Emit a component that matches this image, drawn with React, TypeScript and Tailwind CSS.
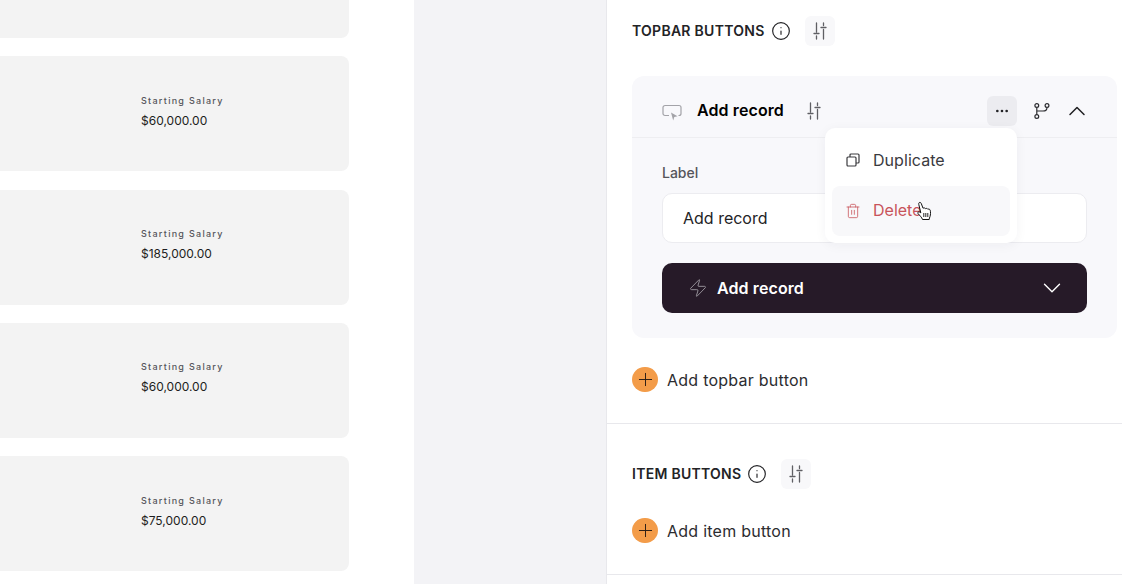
import React from 'react';
import { ChevronDown, ChevronUp, Ellipsis, Info, Plus, Trash2, Zap } from 'lucide-react';

const font = { fontFamily: 'Inter, sans-serif' };

const salaries = ['$60,000.00', '$185,000.00', '$60,000.00', '$75,000.00'];

const SlidersIcon = ({ className = '' }: { className?: string }) => (
  <svg width="14" height="18" viewBox="0 0 14 18" fill="none" stroke="currentColor" strokeWidth="1.3" strokeLinecap="round" className={className}>
    <path d="M3.500 1v9M1 11.500h5M3.500 14v3" />
    <path d="M10.500 1v2.500M8 5.500h5M10.500 7.500V17" />
  </svg>
);

const ScreenIcon = () => (
  <svg width="20" height="18" viewBox="0 0 20 18" fill="none" className="mt-[4px] text-[#a3a3a8]">
    <path d="M7 11.500H3a2 2 0 0 1-2-2V3.500a2 2 0 0 1 2-2h14a2 2 0 0 1 2 2v6a2 2 0 0 1-2 2h-.5" stroke="currentColor" strokeWidth="1.2" />
    <path d="M9 8.500l6.500 3.700-3.200.9-1.100 3.400z" fill="currentColor" />
  </svg>
);

const BranchIcon = () => (
  <svg width="18" height="18" viewBox="0 0 18 18" fill="none" stroke="currentColor" strokeWidth="1.2" className="text-[#2b2b2f]">
    <circle cx="3.800" cy="3.500" r="1.900" />
    <circle cx="14" cy="3.500" r="1.900" />
    <circle cx="3.800" cy="14.500" r="1.900" />
    <path d="M3.800 5.400v7.200M14 5.400c0 2.600-2 3.600-4 3.600H3.800" />
  </svg>
);

const CopyIcon = () => (
  <svg width="14" height="14" viewBox="0 0 14 14" fill="none" stroke="currentColor" strokeWidth="1.200">
    <rect x="1" y="4" width="9" height="9" rx="1" />
    <path d="M4 4V2a1 1 0 0 1 1-1h7a1 1 0 0 1 1 1v7a1 1 0 0 1-1 1h-2" />
  </svg>
);

const HandCursor = () => (
  <svg width="16" height="20" viewBox="0 0 16 20" className="absolute top-[201px] left-[916px]">
    <path
      d="M3 1.800c.8-.8 2-.3 2.300.8L7 7.200c1-.5 2-.3 2.500.4.900-.4 1.800-.2 2.300.6.900-.3 2-.1 2.400 1 .5 1.800.4 4.500-.2 6.300-.4 1.300-.8 2-.8 3H6.500c-.3-1.200-1-2-2-3.200L2 12.500c-.6-.9.300-2 1.300-1.600l1.500.9L2.800 3.500c-.2-.6-.1-1.300.2-1.700z"
      fill="#fff"
      stroke="#111"
      strokeWidth="1"
      strokeLinejoin="round"
    />
    <path d="M7.800 12v4M9.800 12v4M11.800 12v4" stroke="#111" strokeWidth="0.9" />
  </svg>
);

const SectionTitle = ({ title }: { title: string }) => (
  <div className="flex items-center">
    <span className="mb-[1px] text-[14px] font-semibold tracking-[0.27px] text-[#232326]">{title}</span>
    <Info size={20} strokeWidth={1.4} className="ml-[6px] text-[#232326]" />
    <div className="ml-[14px] flex h-[30px] w-[30px] items-center justify-center rounded-md bg-[#f8f8fa] text-[#5f5f64]">
      <SlidersIcon />
    </div>
  </div>
);

const AddRow = ({ label }: { label: string }) => (
  <div className="flex items-center gap-[9px]">
    <div className="flex h-[25px] w-[26px] items-center justify-center rounded-full bg-[#f39c49] text-[#2a1c14]">
      <Plus size={21} strokeWidth={1.1} />
    </div>
    <span className="text-[16px] tracking-[0.25px] text-[#2c2c30]">{label}</span>
  </div>
);

export default function App() {
  return (
    <div className="relative flex h-[584px] w-[1122px] overflow-hidden bg-white" style={font}>
      {/* list preview */}
      <div className="w-[414px] shrink-0">
        <div className="-mt-[77px] -ml-[20px] flex flex-col gap-[18.250px] pr-[65px]">
          <div className="h-[115px] rounded-lg bg-[#f3f3f3]" />
          {salaries.map((salary, i) => (
            <div key={i} className="flex h-[115px] flex-col justify-center rounded-lg bg-[#f3f3f3] pb-[4px] pl-[161px]">
              <div className="text-[9px] leading-[12px] font-medium tracking-[1.280px] text-[#55555a]">Starting Salary</div>
              <div className="mt-[6px] text-[12px] leading-[16px] text-[#1d1d20]">{salary}</div>
            </div>
          ))}
        </div>
      </div>

      <div className="w-[192px] shrink-0 bg-[#f3f3f6]" />

      {/* settings panel */}
      <div className="flex-1 border-l border-[#e8e8ec]">
        <div className="border-b border-[#e8e8ec] pt-[16px] pb-[31px]">
          <div className="pl-[25px]">
            <SectionTitle title="TOPBAR BUTTONS" />
          </div>
          <div className="mt-[30px] ml-[25px] w-[485px] rounded-xl bg-[#f8f8fb]">
            <div className="flex h-[62px] items-center border-b border-[#eeeef1] pt-[8px] pr-[30px] pl-[30px]">
              <ScreenIcon />
              <span className="mb-[1px] ml-[15px] text-[16px] font-semibold tracking-[0.1px] text-black">Add record</span>
              <SlidersIcon className="ml-[23px] text-[#5f5f64]" />
              <div className="ml-auto flex h-[30px] w-[30px] items-center justify-center rounded-md bg-[#ececf0] text-[#232326]">
                <Ellipsis size={16} strokeWidth={2} />
              </div>
              <div className="ml-[16px] flex w-[18px] justify-center">
                <BranchIcon />
              </div>
              <ChevronUp size={28} strokeWidth={1.3} className="-mr-[4px] ml-[12px] text-[#232326]" />
            </div>
            <div className="px-[30px] pt-[25px] pb-[25px]">
              <div className="text-[14px] leading-[20px] font-medium text-[#55555a]">Label</div>
              <div className="mt-[10px] flex h-[50px] items-center rounded-[10px] border border-[#ececf0] bg-white pl-[20px] text-[16px] text-[#232326]">
                Add record
              </div>
              <div className="mt-[20px] flex h-[50px] items-center rounded-[10px] bg-[#261a28] pr-[20px] pl-[26px] text-white">
                <Zap size={20} strokeWidth={1.1} className="text-[#9c98a0]" />
                <span className="mb-[1px] ml-[9px] text-[16px] font-semibold tracking-[0.1px]">Add record</span>
                <ChevronDown size={30} strokeWidth={1.1} className="ml-auto" />
              </div>
            </div>
          </div>
          <div className="mt-[29px] pl-[25px]">
            <AddRow label="Add topbar button" />
          </div>
        </div>

        <div className="border-b border-[#e8e8ec] pt-[35px] pb-[31px] pl-[25px]">
          <SectionTitle title="ITEM BUTTONS" />
          <div className="mt-[29px]">
            <AddRow label="Add item button" />
          </div>
        </div>
      </div>

      {/* open menu */}
      <div className="absolute top-[128px] left-[825px] w-[192px] rounded-[10px] bg-white p-[7px] shadow-[0_2px_12px_rgba(30,30,50,0.05)]">
        <div className="flex h-[50px] items-center pl-[14px] text-[16px] text-[#3a3a3e]">
          <CopyIcon />
          <span className="ml-[13px] tracking-[0.05px]">Duplicate</span>
        </div>
        <div className="mt-[1px] flex h-[50px] items-center rounded-lg bg-[#f8f8fa] pl-[13px] text-[16px] text-[#c8545a]">
          <Trash2 size={16} strokeWidth={1.2} />
          <span className="mb-[2px] ml-[12px]">Delete</span>
        </div>
      </div>
      <HandCursor />
    </div>
  );
}
